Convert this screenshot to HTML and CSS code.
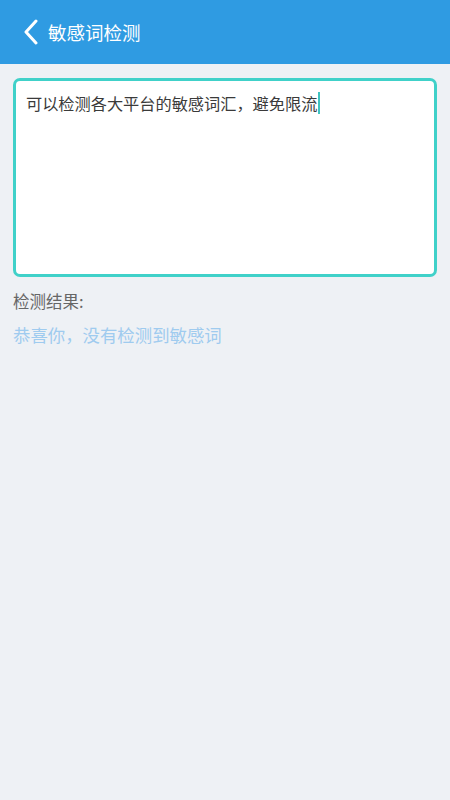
FILE: index.html
```html
<!DOCTYPE html>
<html lang="zh">
<head>
<meta charset="utf-8">
<link rel="stylesheet" href="styles.css">
</head>
<body>
<header class="bar">
  <svg class="back" width="16" height="26" viewBox="0 0 16 26"><path d="M13 2 L3 13 L13 24" fill="none" stroke="#ffffff" stroke-width="3" stroke-linecap="round" stroke-linejoin="round"/></svg>
  <span class="title">敏感词检测</span>
</header>
<main class="content">
  <div class="box"><span class="input">可以检测各大平台的敏感词汇，避免限流</span><span class="cursor"></span></div>
  <div class="label">检测结果:</div>
  <div class="result">恭喜你，没有检测到敏感词</div>
</main>
</body>
</html>
```
FILE: styles.css
```css
html, body {
  margin: 0;
  padding: 0;
  background: #eef1f5;
  font-family: "Noto Sans CJK SC", "Noto Sans", sans-serif;
}
.bar {
  height: 64px;
  background: #2f9be2;
  display: flex;
  align-items: center;
  padding-left: 23px;
  box-sizing: border-box;
}
.back {
  display: block;
  margin-top: 0;
}
.title {
  color: #ffffff;
  font-size: 18.5px;
  margin-left: 9px;
  margin-top: 0;
}
.content {
  padding: 14px 13px 0 13px;
}
.box {
  height: 199px;
  box-sizing: border-box;
  border: 3px solid #40d1c9;
  border-radius: 7px;
  background: #ffffff;
  padding: 10px 10px;
  display: flex;
  align-items: flex-start;
}
.input {
  font-size: 16.2px;
  color: #3a3a3a;
  line-height: 24px;
}
.cursor {
  display: inline-block;
  width: 2px;
  height: 22px;
  background: #40c3c0;
  margin-left: 1px;
  margin-top: 1px;
}
.label {
  margin-top: 12px;
  font-size: 16.5px;
  color: #666666;
  line-height: 24px;
}
.result {
  margin-top: 10px;
  font-size: 17.4px;
  color: #9fcbef;
  line-height: 24px;
}
```
